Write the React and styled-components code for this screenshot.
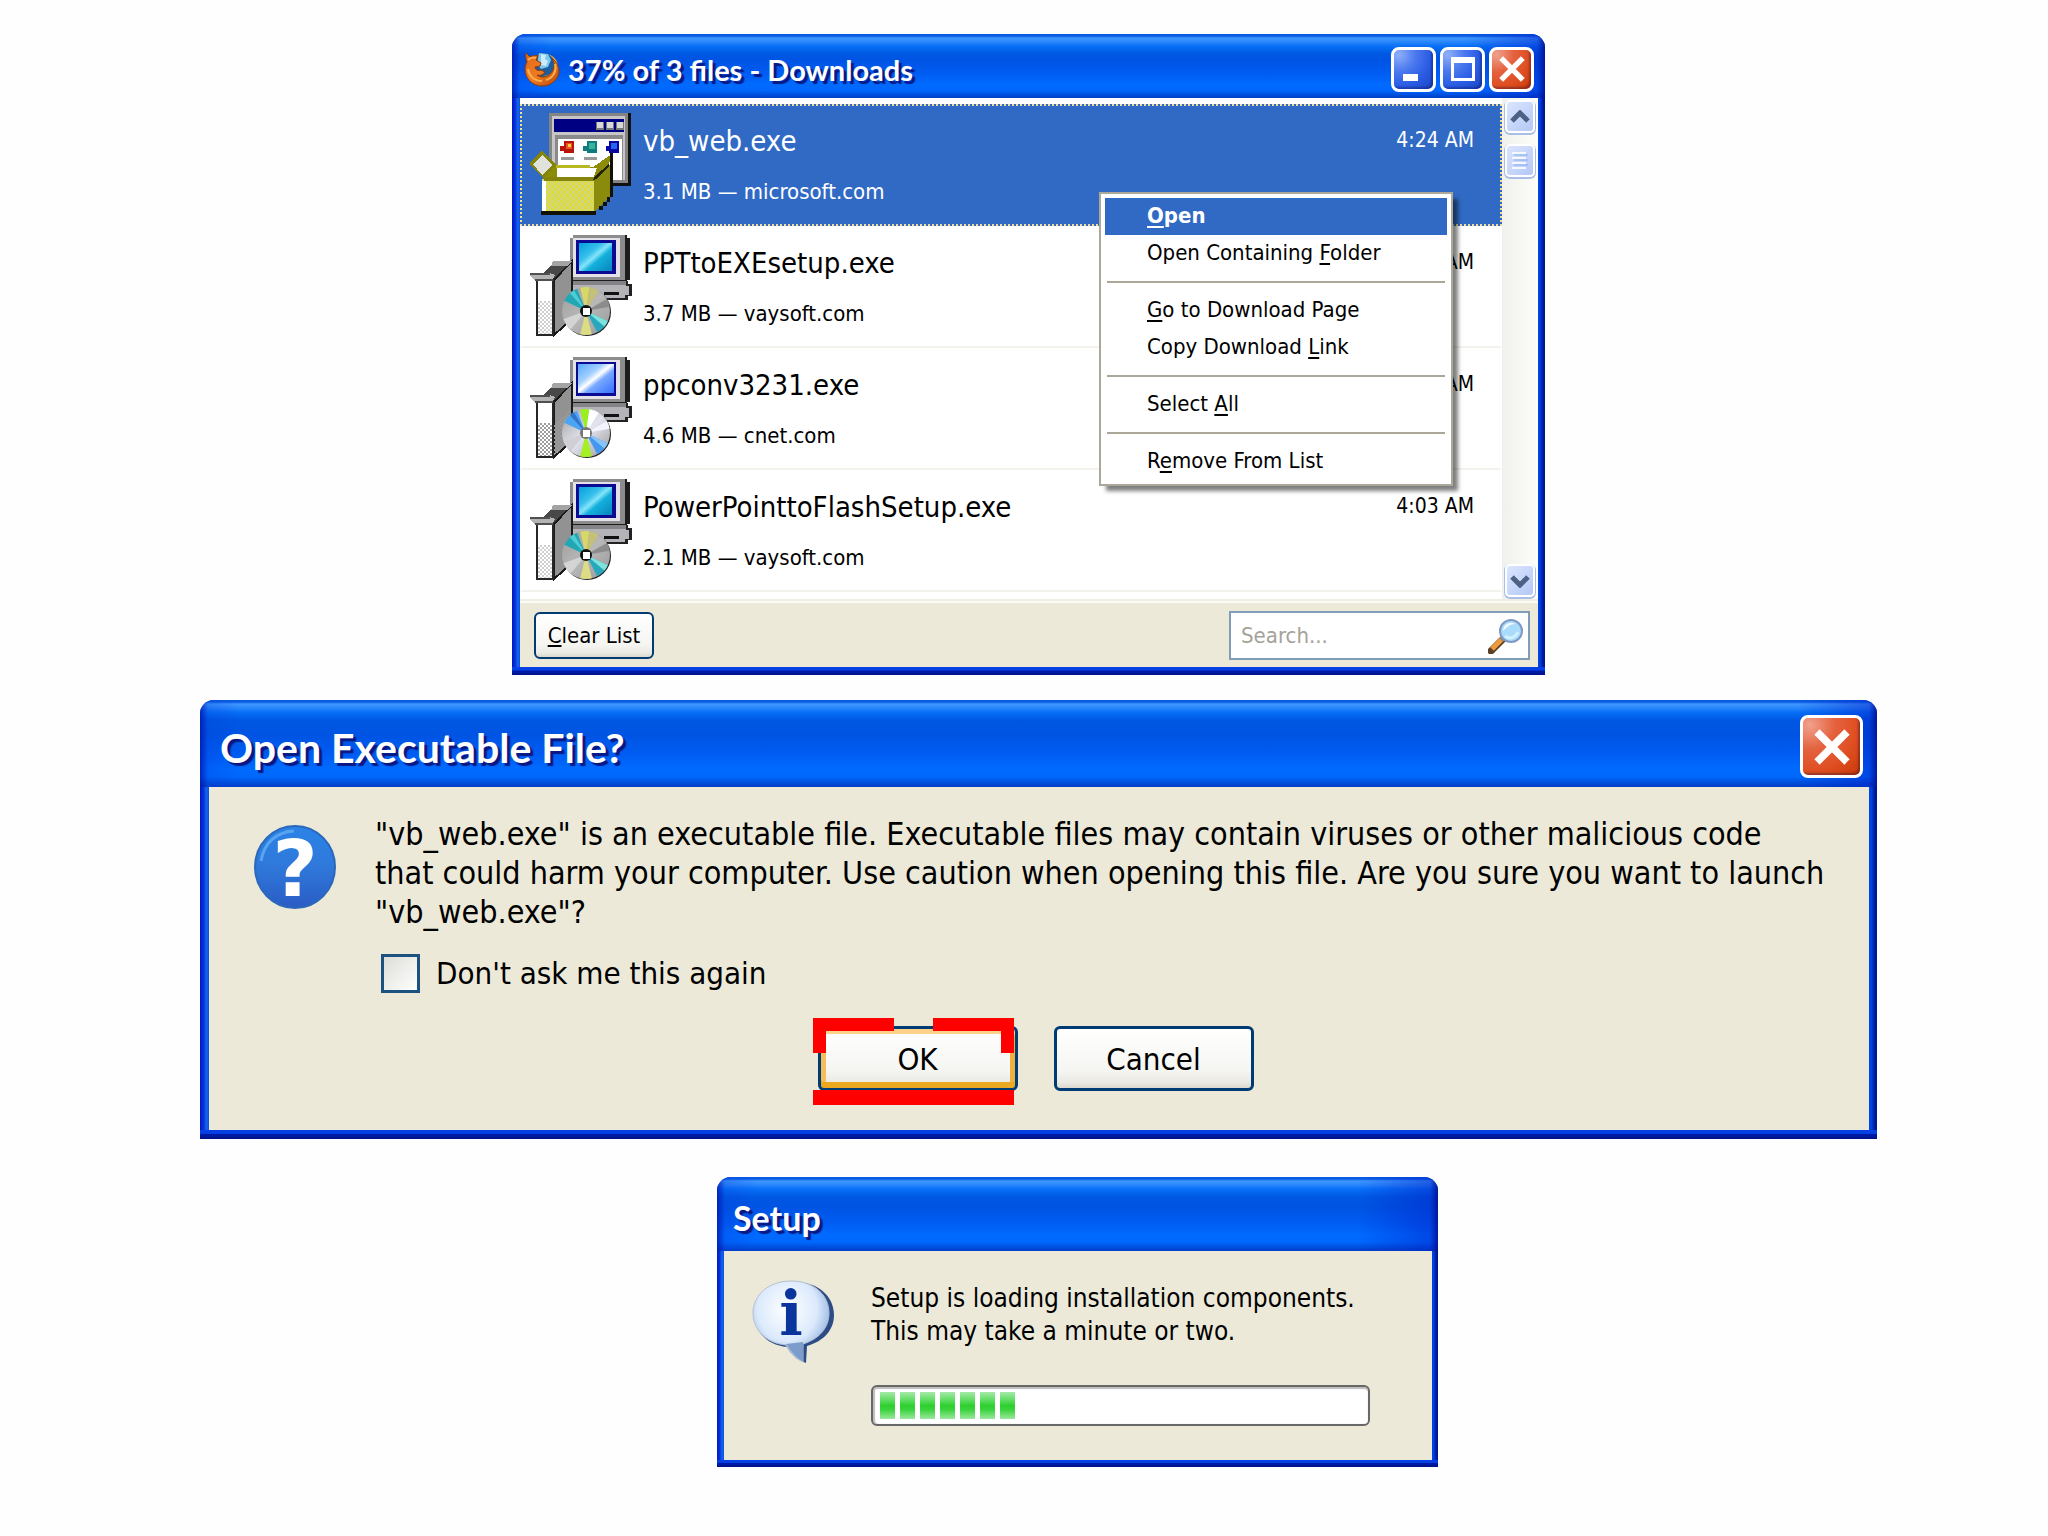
import React from 'react'
import styled, { createGlobalStyle, css } from 'styled-components'

const GlobalStyle = createGlobalStyle`
  * {
    box-sizing: border-box;
  }

  body {
    margin: 0;
    background: #fefefe;
    color: #000;
    font-family: "DejaVu Sans Condensed", "DejaVu Sans", sans-serif;
    font-size: 22px;
  }

  button, input {
    font: inherit;
    color: inherit;
  }
`;

const Page = styled.main`
  display: flex;
  flex-direction: column;
  padding: 34px 0 64px;
`;

/* one line of the page: free space, the window, free space */
const Stage = styled.div`
  display: grid;
  grid-template-columns: ${props => props.$columns};
  margin-bottom: ${props => props.$gap || 0}px;
`;

const StyledWindow = styled.section`
  grid-column: 2;
  position: relative;
  border-radius: 14px 14px 0 0;
  padding: 0 ${props => props.$edge - 1}px ${props => props.$edge}px ${props => props.$edge}px;
  background:
    linear-gradient(#0a3fe6 0, #0040e0 40%, #0019a6 50%, #00138c 100%) bottom / 100% ${props => props.$edge}px no-repeat,
    linear-gradient(90deg, #0019c4 0, #0831d9 40%, #1464ee 70%, #0855dd 100%) left / ${props => props.$edge}px 100% no-repeat,
    linear-gradient(90deg, #0048e8 0, #003fe0 40%, #001ea0 70%, #00138c 100%) right / ${props => props.$edge}px 100% no-repeat,
    #0831d9;
`;

const TitleBar = styled.header`
  display: flex;
  align-items: center;
  gap: 4px;
  height: ${props => props.$height}px;
  margin: 0 -${props => props.$edge - 1}px 0 -${props => props.$edge}px;
  padding: 6px ${props => props.$right}px 0 12px;
  border-radius: 14px 14px 0 0;
  background:
    linear-gradient(90deg, rgba(0, 16, 170, .75) 0, rgba(0, 60, 220, .25) 8px, transparent 40px),
    linear-gradient(270deg, rgba(0, 16, 150, .9) 0, rgba(0, 30, 200, .45) 8px, transparent 80px),
    linear-gradient(
      #0a5be4 0, #0a5be4 2px,
      #3e98ff 4px, #2a86fb 8px,
      #0870f8 12px, #0058e2 20px,
      #0054e3 40%, #005cf2 62%,
      #006aff 78%, #0068fc 88%,
      #0048d4 97%, #0040c4 100%
    );
`;

const Title = styled.h1`
  flex-grow: 1;
  margin: 0;
  padding-top: 2px;
  padding-left: ${props => props.$indent || 0}px;
  color: #fff;
  font: bold ${props => props.$size}px/44px Lato, "Open Sans", sans-serif;
  text-shadow: 3px 3px 1px #0a1883;
  white-space: nowrap;
`;

const CaptionButton = styled.button`
  display: grid;
  place-items: center;
  width: ${props => props.$size}px;
  height: ${props => props.$size}px;
  padding: 0;
  border: 3px solid #fff;
  border-radius: 8px;
  background: ${props => props.$danger
    ? 'radial-gradient(circle at 12% 12%, #f0a18c 0, #e4623f 35%, #e04f22 65%, #c83806 100%)'
    : 'radial-gradient(circle at 12% 12%, #8fb0fa 0, #4a78ee 35%, #2a5ce4 65%, #1c46c4 100%)'
  };
  box-shadow: inset -2px -2px 2px rgba(0, 0, 60, .3);

  svg {
    display: block;
  }
`;

const FileList = styled.ul`
  flex-grow: 1;
  margin: 0;
  padding: 6px 0 7px;
  list-style: none;
`;

const FileRow = styled.li`
  display: flex;
  align-items: flex-start;
  gap: 11px;
  padding: 7px 26px 9px 8px;
  border: 2px solid transparent;
  border-bottom-color: #f3f2ec;

  ${props => props.$selected && css`
    border: 2px dotted #f0dc9c;
    background: #316ac5;
    color: #fff;
  `}
`;

const FileText = styled.div`
  display: flex;
  flex-direction: column;
  flex-grow: 1;
  gap: 16px;
  padding-top: 8px;
`;

const FileName = styled.span`
  font-size: 29px;
  line-height: 40px;
`;

const FileInfo = styled.span`
  line-height: 30px;
`;

const FileTime = styled.time`
  padding-top: 12px;
  font-size: 21px;
  line-height: 30px;
`;

const ListPanel = styled.div`
  display: flex;
  background: #fff;
  border-bottom: 2px solid #f0efe4;
`;

const ScrollBar = styled.div`
  display: flex;
  flex-direction: column;
  gap: 11px;
  width: 36px;
  padding: 2px 3px;
  background: linear-gradient(90deg, #f0f0ec, #fdfdfa);
`;

const ScrollButton = styled.button`
  display: grid;
  place-items: center;
  height: 33px;
  padding: 0;
  border: 2px solid #fff;
  border-radius: 5px;
  background: linear-gradient(135deg, #dbe5fe, #b4c8f6);
  box-shadow: 0 1px 0 1px #a9bfe8;

  &:last-child {
    margin-top: auto;
  }
`;

const ListFooter = styled.footer`
  display: flex;
  align-items: center;
  justify-content: space-between;
  padding: 8px 8px 7px 14px;
  border-top: 2px solid #fbfbf6;
  background: #ece9d8;
`;

const PushButton = styled.button`
  min-width: ${props => props.$width}px;
  height: ${props => props.$height}px;
  padding: 0 10px;
  border: 3px solid #003c74;
  border-radius: 6px;
  background: linear-gradient(#fff, #f5f5f2 70%, #ebeae4 90%, #dcd8cc);
  font-size: ${props => props.$size || 22}px;
  ${props => props.$height < 50 && css`border-width: 2px;`}

  ${props => props.$primary && css`
    box-shadow: inset 0 5px 0 #fcd28a, inset 0 -6px 0 #eba922, inset 5px 0 0 #f6bd58, inset -5px 0 0 #f0b040;
  `}
`;

const SearchBox = styled.label`
  display: flex;
  align-items: center;
  width: 301px;
  height: 49px;
  padding: 0 4px 0 10px;
  border: 2px solid #7f9db9;
  background: #fff;
`;

const SearchInput = styled.input`
  flex-grow: 1;
  min-width: 0;
  padding: 0;
  border: 0;
  outline: 0;
  background: none;

  &::placeholder {
    color: #a5a299;
    opacity: 1;
  }
`;

const Menu = styled.div`
  position: absolute;
  top: 158px;
  right: 92px;
  width: 354px;
  padding: 4px;
  border: 2px solid #aca899;
  background: #fff;
  box-shadow: 6px 6px 4px -1px rgba(0, 0, 0, .5);
`;

const MenuItem = styled.button`
  display: block;
  width: 100%;
  padding: 0 0 2px 42px;
  border: 0;
  background: ${props => props.$active ? '#316ac5' : 'none'};
  color: ${props => props.$active ? '#fff' : '#000'};
  font-weight: ${props => props.$active ? 'bold' : 'normal'};
  line-height: 35px;
  text-align: left;

  u {
    text-underline-offset: 3px;
    text-decoration-thickness: 2px;
  }
`;

const MenuSeparator = styled.hr`
  height: 2px;
  margin: 9px 2px;
  border: 0;
  background: #aca899;
`;

const DialogBody = styled.div`
  display: flex;
  flex-direction: column;
  padding: 28px 38px 39px 45px;
  background: #ece9d8;
`;

const Message = styled.div`
  display: flex;
  align-items: flex-start;
  gap: ${props => props.$gap}px;

  svg {
    flex-shrink: 0;
  }
`;

const QuestionSlot = styled.div`
  padding-top: 7px;
`;

const MessageColumn = styled.div`
  display: flex;
  flex-direction: column;
  flex-grow: 1;
  gap: ${props => props.$gap}px;
  padding-top: ${props => props.$top || 0}px;
`;

const MessageText = styled.p`
  margin: 0;
  font-size: ${props => props.$size}px;
  line-height: ${props => props.$line}px;
`;

const CheckLabel = styled.label`
  display: flex;
  align-items: center;
  gap: 16px;
  padding-left: 6px;
  font-size: 31px;
  line-height: 39px;
`;

const CheckBox = styled.input`
  appearance: none;
  width: 39px;
  height: 39px;
  margin: 0;
  border: 3px solid #1c5180;
  background: linear-gradient(135deg, #dcdcd7, #fff);
`;

const ButtonRow = styled.div`
  display: flex;
  justify-content: center;
  gap: 36px;
  padding: 33px 14px 0 0;
`;

const Marked = styled.div`
  position: relative;
`;

/* red call-out drawn over the default button */
const MarkCorner = styled.span`
  position: absolute;
  top: -8px;
  left: ${props => props.$right ? 115 : -5}px;
  width: 81px;
  height: 35px;
  border: 0 solid #f00;
  border-top-width: 13px;
  ${props => props.$right ? 'border-right-width' : 'border-left-width'}: 13px;
`;

const MarkLine = styled.span`
  position: absolute;
  bottom: -14px;
  left: -5px;
  width: 201px;
  height: 15px;
  background: #f00;
`;

const SetupBody = styled.div`
  padding: 23px 62px 34px 28px;
  background: #ece9d8;
`;

const ProgressTrack = styled.div`
  display: flex;
  gap: 5px;
  height: 41px;
  padding: 5px 7px;
  border: 2px solid #686868;
  border-radius: 6px;
  background: #fff;
  box-shadow: inset 0 2px 1px #bebebe, inset 2px 0 1px #bebebe;
`;

const ProgressChunk = styled.span`
  width: 15px;
  background: linear-gradient(#a6eaa8, #5fdc62 30%, #2ed02f 50%, #3bd33d 65%, #9ae89c);
`;

const FirefoxIcon = () => (
  <svg width="36" height="36" viewBox="0 0 36 36" aria-hidden="true">
    <defs>
      <linearGradient id="fox" x1="0" y1="0" x2="1" y2="1">
        <stop offset="0" stopColor="#e2661c" />
        <stop offset=".5" stopColor="#ee7c22" />
        <stop offset="1" stopColor="#b9480c" />
      </linearGradient>
    </defs>
    <circle cx="19" cy="16" r="14" fill="#1b5d9e" />
    <path d="M15 2l9 1 3 6-3 7-7 2-4-5z" fill="#7cc6ee" />
    <path d="M17 3l5 1-1 4 3 2-2 5-5-1z" fill="#c9ecfb" />
    <path d="M24 3c5 3 7 8 6 13-1 6-6 9-11 9 6 2 12-2 14-8 2-5-1-11-9-14z" fill="#f5a93a" />
    <path d="M2 2l4 4c2-1 4-2 8-1l-2 4 5 3-1 3-5 1c0 3 3 4 6 3l4 2c-2 3-5 4-8 3 5 4 13 2 16-5 2-4 1-9-1-12 5 4 7 9 7 14-1 8-8 14-17 14C9 35 1 28 1 18c0-3 1-5 2-7-1-3-2-6-1-9z" fill="url(#fox)" stroke="#8e3908" strokeWidth="1" />
    <path d="M4 9c3-3 5-3 8-2M4 18c1 7 6 12 14 12M31 13c2 7-2 14-9 16" fill="none" stroke="#fbb04c" strokeWidth="2" />
  </svg>
);

const PackageIcon = () => (
  <svg width="102" height="102" viewBox="0 0 102 102" shapeRendering="crispEdges" aria-hidden="true">
    <defs>
      <pattern id="boxDots" width="6" height="6" patternUnits="userSpaceOnUse">
        <rect width="6" height="6" fill="#dcdc34" />
        <path d="M0 0h3v3H0zM3 3h3v3H3z" fill="#d2d680" />
      </pattern>
    </defs>
    <path d="M19 0h82v73H19z" fill="#111" />
    <path d="M19 0h79v70H19z" fill="#848484" />
    <path d="M22 3h73v64H22z" fill="#c6c6c6" />
    <path d="M24 6h70v13H24z" fill="#000082" />
    <path d="M66 9h8v8h-8zM76 9h8v8h-8zM86 9h8v8h-8z" fill="#777" />
    <path d="M67 9h6v6h-6zM77 9h6v6h-6zM87 9h6v6h-6z" fill="#d8d8d8" />
    <path d="M25 22h68v45H25z" fill="#8a8a8a" />
    <path d="M28 26h64v41H28z" fill="#fff" />
    <path d="M34 28h10v12H34zM30 33h5v5h-5z" fill="#b81408" />
    <path d="M36 30h6v6h-6z" fill="#f05028" />
    <path d="M38 31h3v3h-3z" fill="#ffd23c" />
    <path d="M57 28h10v12H57zM53 33h5v5h-5z" fill="#117c7c" />
    <path d="M59 30h6v6h-6z" fill="#34b4a0" />
    <path d="M79 28h10v12H79zM76 33h5v5h-5z" fill="#0808a0" />
    <path d="M81 30h6v6h-6z" fill="#2464f0" />
    <path d="M31 44h13v3H31zM54 44h13v3H54z" fill="#999" />
    <path d="M12 38L26 52v8l10 7-8 6h-6L0 52v-3z" fill="#84840a" />
    <path d="M12 42l10 10-10 10L3 51z" fill="#e2e2dc" />
    <path d="M12 66l13-12h38l19-13v5L66 68z" fill="#8c8c08" />
    <path d="M27 55h40l-3 9H27z" fill="#fff" />
    <path d="M26 52h34v3H26z" fill="#b8b820" />
    <path d="M12 66h54v33H12z" fill="url(#boxDots)" />
    <path d="M12 68h4v30h-4z" fill="#fff" />
    <path d="M14 64h52v4H14z" fill="#85850c" />
    <path d="M64 67l16-16v33L64 99z" fill="#8a8a0c" />
    <path d="M80 40h3v44h-3zM77 84h3v5h-3zM73 89h4v4h-4zM69 93h4v4h-4zM11 98h55v4H11z" fill="#101004" />
    <path d="M63 67l4-1 12-13v-2L65 63z" fill="#24240a" />
  </svg>
);

const wedge = (from, to) => {
  const at = deg => `${56 + 24 * Math.cos(deg * Math.PI / 180)} ${76 + 24 * Math.sin(deg * Math.PI / 180)}`;
  return `M56 76L${at(from)}A24 24 0 0 1 ${at(to)}z`;
};

const InstallerIcon = ({ id, bright }) => (
  <svg width="102" height="102" viewBox="0 0 102 102" aria-hidden="true">
    <defs>
      <linearGradient id={`screen-${id}`} x1="0" y1="0" x2="1" y2="1">
        <stop offset="0" stopColor={bright ? '#58a8ff' : '#00a0dc'} />
        <stop offset=".35" stopColor={bright ? '#a4d0ff' : '#38c0ec'} />
        <stop offset=".48" stopColor={bright ? '#ffffff' : '#84e4fa'} />
        <stop offset=".6" stopColor={bright ? '#78a8ff' : '#14b0dc'} />
        <stop offset="1" stopColor={bright ? '#3470ff' : '#0884bc'} />
      </linearGradient>
      <pattern id={`dots-${id}`} width="4" height="4" patternUnits="userSpaceOnUse">
        <path d="M0 0h2v2H0zM2 2h2v2H2z" fill={bright ? '#9c9c9c' : '#d0d0d0'} />
      </pattern>
      <linearGradient id={`disc-${id}`} x1="0" y1="0" x2="1" y2="1">
        <stop offset="0" stopColor="#9c9c9c" />
        <stop offset=".5" stopColor={bright ? '#e4e4f0' : '#b8b8b8'} />
        <stop offset="1" stopColor="#989898" />
      </linearGradient>
    </defs>
    <g shapeRendering="crispEdges">
      <path d="M43 0h54v3h3v42h-3v3H43v-3h-3V3h3z" fill="#1c1c1c" />
      <path d="M43 0h52v45H43v-3h-3V3h3z" fill="#8c8c8c" />
      <path d="M43 3h47v39H43z" fill="#e4e2e8" />
      <path d="M46 5h40v34H46z" fill="#0a0a92" />
      <path d={bright ? 'M48 7h36v29H48z' : 'M49 8h33v28H49z'} fill={`url(#screen-${id})`} />
      <path d="M40 46h58v3h4v12h-4v4H40z" fill="#222" />
      <path d="M40 48h56v3h3v9h-4v3H40z" fill="#b4b4b8" />
      <path d="M40 46h56v4H40z" fill="#848488" />
      <path d="M74 57h15v3H74z" fill="#111" />
      <path d="M24 45L42 26v58L24 100z" fill="#929292" stroke="#1a1a1a" strokeWidth="2" />
      {bright && <path d="M24 68l16-14v30L24 98z" fill={`url(#dots-${id})`} />}
      <path d="M14 38l11-12h17L24 43z" fill="#484848" />
      <path d="M23 26h19l-4 5H21z" fill="#a4a4a4" />
      <path d="M7 42h16v58H7z" fill="#fff" stroke="#262626" strokeWidth="2" />
      <path d="M8 66h14v33H8z" fill={`url(#dots-${id})`} />
      <path d="M0 38h20l5 2-3 6H6L0 41z" fill="#b4b4b4" />
      <path d="M0 38h20v2H0zM5 44h18v2H5z" fill="#505050" />
    </g>
    <circle cx="57" cy="77" r="24" fill="#222" />
    <circle cx="56" cy="76" r="24" fill={`url(#disc-${id})`} />
    <path d={wedge(205, 248)} fill={bright ? '#4ca4f4' : '#22a8b4'} />
    <path d={wedge(228, 240)} fill={bright ? '#3474c8' : '#50ccd4'} />
    <path d={wedge(256, 278)} fill={bright ? '#98f01c' : '#d6d868'} />
    <path d={wedge(278, 302)} fill={bright ? '#fff' : '#c4c078'} />
    <path d={wedge(25, 62)} fill={bright ? '#4498f0' : '#28a8bc'} />
    <path d={wedge(25, 40)} fill={bright ? '#88c4f8' : '#7ce4dc'} />
    <path d={wedge(76, 104)} fill={bright ? '#a4f024' : '#dcdc84'} />
    <path d={wedge(330, 350)} fill={bright ? '#f4f4ff' : '#8c8c8c'} />
    <path d={wedge(130, 160)} fill={bright ? '#d0d0d4' : '#d4d4d4'} />
    <circle cx="56" cy="76" r="6" fill={bright ? '#777' : '#111'} />
    <rect x="53" y="73" width="7" height="7" fill="#fff" />
  </svg>
);

const SearchIcon = () => (
  <svg width="36" height="36" viewBox="0 0 36 36" aria-hidden="true">
    <path d="M3 33L15 21" stroke="#5a4028" strokeWidth="7" strokeLinecap="round" />
    <path d="M4 31L15 20" stroke="#f09a3c" strokeWidth="5" />
    <path d="M13 22l3-3" stroke="#888" strokeWidth="4" />
    <circle cx="23" cy="13" r="11" fill="#a8dcfa" stroke="#7f98c4" strokeWidth="2" />
    <path d="M15 13a8 8 0 0 1 12-7c-5 0-8 3-12 7z" fill="#f4fcff" />
    <path d="M17 18c5 4 11 1 13-4" fill="none" stroke="#d0f0ff" strokeWidth="3" />
  </svg>
);

const QuestionIcon = () => (
  <svg width="84" height="96" viewBox="0 -3 84 96" aria-hidden="true">
    <defs>
      <linearGradient id="ask" x1="0" y1="0" x2="0" y2="1">
        <stop offset="0" stopColor="#2a84e6" />
        <stop offset=".5" stopColor="#2f78da" />
        <stop offset="1" stopColor="#2a5cc4" />
      </linearGradient>
    </defs>
    <ellipse cx="41" cy="42" rx="40" ry="41" fill="url(#ask)" stroke="#2a68bc" strokeWidth="2" />
    <path d="M7 36C10 18 22 7 40 6" fill="none" stroke="#58a4f0" strokeWidth="3" />
    <text x="41" y="71" textAnchor="middle" fill="#fff" fontFamily="DejaVu Sans" fontWeight="bold" fontSize="78">?</text>
  </svg>
);

const InfoIcon = () => (
  <svg width="84" height="92" viewBox="0 -6 84 92" aria-hidden="true">
    <defs>
      <radialGradient id="balloon" cx=".45" cy=".35" r=".65">
        <stop offset="0" stopColor="#fff" />
        <stop offset=".6" stopColor="#dceafc" />
        <stop offset="1" stopColor="#86a8dc" />
      </radialGradient>
    </defs>
    <path d="M43 2c23 0 39 14 39 33 0 15-10 26-27 31l-1 17C46 80 39 75 35 67 15 65 3 52 3 35 3 16 20 2 43 2z" fill="#2c4c86" />
    <path d="M39 1c23 0 38 14 38 32 0 15-10 26-26 31v18c-8-4-13-9-17-17C14 63 1 50 1 33 1 15 17 1 39 1z" fill="url(#balloon)" stroke="#b4c0d4" strokeWidth="1" />
    <path d="M34 64l17-2v19c-7-4-12-9-17-17z" fill="#7c9ccc" />
    <text x="39" y="55" textAnchor="middle" fill="#0a359c" fontFamily="DejaVu Serif" fontWeight="bold" fontSize="62">i</text>
  </svg>
);

const CrossGlyph = ({ size }) => (
  <svg width={size} height={size} viewBox="0 0 24 24" aria-hidden="true">
    <path d="M2 2l20 20M22 2L2 22" stroke="#fff" strokeWidth="5" />
  </svg>
);

const Arrow = ({ down }) => (
  <svg width="20" height="14" viewBox="0 0 20 14" aria-hidden="true">
    <path d={down ? 'M2 3l8 8 8-8' : 'M2 11l8-8 8 8'} fill="none" stroke="#4d6185" strokeWidth="5" />
  </svg>
);

const files = [
  { name: 'vb_web.exe', info: '3.1 MB — microsoft.com', time: '4:24 AM', selected: true },
  { name: 'PPTtoEXEsetup.exe', info: '3.7 MB — vaysoft.com', time: 'AM' },
  { name: 'ppconv3231.exe', info: '4.6 MB — cnet.com', time: 'AM', bright: true },
  { name: 'PowerPointtoFlashSetup.exe', info: '2.1 MB — vaysoft.com', time: '4:03 AM' }
];

const DownloadsWindow = () => (
  <StyledWindow $edge={8} aria-label="Downloads">
    <TitleBar $edge={8} $height={64} $right={11}>
      <FirefoxIcon />
      <Title $size={29} $indent={4}>37% of 3 files - Downloads</Title>
      <CaptionButton $size={45} aria-label="Minimize">
        <svg width="30" height="30" viewBox="0 0 30 30"><path d="M4 20h15v7H4z" fill="#fff" /></svg>
      </CaptionButton>
      <CaptionButton $size={45} aria-label="Maximize">
        <svg width="26" height="26" viewBox="0 0 26 26"><path d="M1 1h24v24H1zM4 7v15h18V7z" fill="#fff" fillRule="evenodd" /></svg>
      </CaptionButton>
      <CaptionButton $size={45} $danger aria-label="Close"><CrossGlyph size={26} /></CaptionButton>
    </TitleBar>
    <ListPanel>
      <FileList>
        {files.map((file, i) => (
          <FileRow key={file.name} $selected={file.selected}>
            {file.selected ? <PackageIcon /> : <InstallerIcon id={i} bright={file.bright} />}
            <FileText>
              <FileName>{file.name}</FileName>
              <FileInfo>{file.info}</FileInfo>
            </FileText>
            <FileTime>{file.time}</FileTime>
          </FileRow>
        ))}
      </FileList>
      <ScrollBar>
        <ScrollButton aria-label="Scroll up"><Arrow /></ScrollButton>
        <ScrollButton aria-label="Scroll thumb">
          <svg width="16" height="18" viewBox="0 0 16 18">
            <path d="M0 1h14M0 6h14M0 11h14M0 16h14" stroke="#f4f8ff" strokeWidth="2" />
            <path d="M2 3h14M2 8h14M2 13h14" stroke="#8cacf0" strokeWidth="1" />
          </svg>
        </ScrollButton>
        <ScrollButton aria-label="Scroll down"><Arrow down /></ScrollButton>
      </ScrollBar>
    </ListPanel>
    <ListFooter>
      <PushButton $width={120} $height={47}><u>C</u>lear List</PushButton>
      <SearchBox>
        <SearchInput type="text" placeholder="Search..." aria-label="Search downloads" />
        <SearchIcon />
      </SearchBox>
    </ListFooter>
    <Menu role="menu">
      <MenuItem role="menuitem" $active><u>O</u>pen</MenuItem>
      <MenuItem role="menuitem">Open Containing <u>F</u>older</MenuItem>
      <MenuSeparator />
      <MenuItem role="menuitem"><u>G</u>o to Download Page</MenuItem>
      <MenuItem role="menuitem">Copy Download <u>L</u>ink</MenuItem>
      <MenuSeparator />
      <MenuItem role="menuitem">Select <u>A</u>ll</MenuItem>
      <MenuSeparator />
      <MenuItem role="menuitem">R<u>e</u>move From List</MenuItem>
    </Menu>
  </StyledWindow>
);

const OpenDialog = () => (
  <StyledWindow $edge={9} role="dialog" aria-label="Open Executable File?">
    <TitleBar $edge={9} $height={87} $right={14}>
      <Title $size={41} $indent={8}>Open Executable File?</Title>
      <CaptionButton $size={63} $danger aria-label="Close"><CrossGlyph size={36} /></CaptionButton>
    </TitleBar>
    <DialogBody>
      <Message $gap={37}>
        <QuestionSlot><QuestionIcon /></QuestionSlot>
        <MessageColumn $gap={22}>
          <MessageText $size={32} $line={39}>
            "vb_web.exe" is an executable file. Executable files may contain viruses or other malicious code<br />
            that could harm your computer. Use caution when opening this file. Are you sure you want to launch<br />
            "vb_web.exe"?
          </MessageText>
          <CheckLabel>
            <CheckBox type="checkbox" />
            Don't ask me this again
          </CheckLabel>
        </MessageColumn>
      </Message>
      <ButtonRow>
        <Marked>
          <PushButton $width={200} $height={65} $size={31} $primary>OK</PushButton>
          <MarkCorner />
          <MarkCorner $right />
          <MarkLine />
        </Marked>
        <PushButton $width={200} $height={65} $size={31}>Cancel</PushButton>
      </ButtonRow>
    </DialogBody>
  </StyledWindow>
);

const SetupWindow = () => {
  const chunks = 7;

  return (
    <StyledWindow $edge={7} role="dialog" aria-label="Setup">
      <TitleBar $edge={7} $height={74} $right={10}>
        <Title $size={34} $indent={4}>Setup</Title>
      </TitleBar>
      <SetupBody>
        <Message $gap={35}>
          <InfoIcon />
          <MessageColumn $gap={37} $top={8}>
            <MessageText $size={26} $line={33}>
              Setup is loading installation components.<br />
              This may take a minute or two.
            </MessageText>
            <ProgressTrack role="progressbar" aria-label="Loading" aria-valuenow={28}>
              {Array.from({ length: chunks }, (_, i) => <ProgressChunk key={i} />)}
            </ProgressTrack>
          </MessageColumn>
        </Message>
      </SetupBody>
    </StyledWindow>
  );
};

const App = () => (
  <>
    <GlobalStyle />
    <Page>
      <Stage $columns="512fr 1033fr 503fr" $gap={25}>
        <DownloadsWindow />
      </Stage>
      <Stage $columns="200fr 1677fr 171fr" $gap={38}>
        <OpenDialog />
      </Stage>
      <Stage $columns="717fr 721fr 610fr">
        <SetupWindow />
      </Stage>
    </Page>
  </>
);

export default App
